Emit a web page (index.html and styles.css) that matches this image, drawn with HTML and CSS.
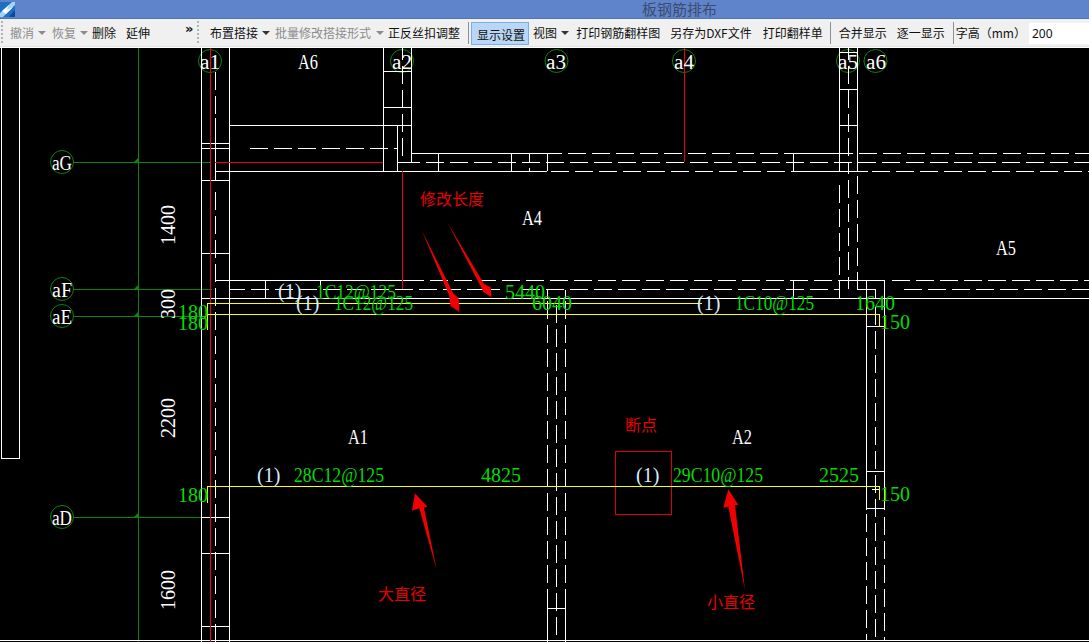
FILE: index.html
```html
<!DOCTYPE html>
<html lang="zh">
<head>
<meta charset="utf-8">
<title>板钢筋排布</title>
<link rel="stylesheet" href="styles.css">
</head>
<body>
<header class="titlebar">
  <svg class="app-icon" viewBox="0 0 15 15" width="15" height="15">
    <rect x="0" y="0" width="15" height="15" fill="#1f6fc4"/>
    <path d="M0 11 L12 0 H15 V3 L3 15 H0Z" fill="#9fd4f5"/>
    <path d="M2 9 L9 3 L7 8 L13 5 L6 12Z" fill="#ffffff"/>
    <path d="M9 15 L15 8 V15Z" fill="#0b4a94"/>
  </svg>
  <span class="title">板钢筋排布</span>
</header>
<nav class="toolbar">
  <span class="grip first"></span>
  <span class="tool off m7">撤消</span><i class="caret off-caret"></i>
  <span class="tool off m7">恢复</span><i class="caret off-caret"></i>
  <span class="tool m5">删除</span>
  <span class="tool m10">延伸</span>
  <span class="more">»</span>
  <span class="grip second"></span>
  <span class="tool m11">布置搭接</span><i class="caret"></i>
  <span class="tool off m6">批量修改搭接形式</span><i class="caret off-caret wide"></i>
  <span class="tool m5">正反丝扣调整</span>
  <span class="sep m8"></span>
  <span class="tool pressed">显示设置</span>
  <span class="tool m4">视图</span><i class="caret"></i>
  <span class="tool m8">打印钢筋翻样图</span>
  <span class="tool m10">另存为DXF文件</span>
  <span class="tool m11">打印翻样单</span>
  <span class="sep m7"></span>
  <span class="tool m8">合并显示</span>
  <span class="tool m10">逐一显示</span>
  <span class="sep m8"></span>
  <span class="tool m2 trim">字高（mm）</span>
  <input class="height-input" type="text" value="200">
</nav>
<main class="canvas">
  <svg class="drawing" viewBox="0 48 1089 594" width="1089" height="594">
    <!-- axis lines -->
    <path class="axis" d="M138.5 48V642 M73 162.5H210 M73 289.5H212 M73 316.5H205 M73 517.5H202"/>
    <path class="tick" d="M138 158V162H134Z M138 285V289H134Z M138 312V316H134Z M138 513V517H134Z"/>
    <g class="bubble">
      <circle cx="210" cy="61" r="11.5"/><circle cx="402" cy="61" r="11.5"/><circle cx="556.5" cy="61" r="11.5"/>
      <circle cx="684" cy="61" r="11.5"/><circle cx="848" cy="61" r="11.5"/><circle cx="875.5" cy="61" r="11.5"/>
      <circle cx="62" cy="162" r="11.5"/><circle cx="62" cy="289" r="11.5"/><circle cx="62" cy="316" r="11.5"/><circle cx="62" cy="517" r="11.5"/>
    </g>

    <!-- solid walls -->
    <path class="wall" d="
      M1.5 48V458.5H19.5V48
      M201.5 48V642 M229.5 48V642
      M201 143.5H230 M201 148.5H230 M201 180.5H230 M201 253.5H230
      M201 517.5H230 M201 553.5H230 M201 626.5H230
      M215.5 118V180
      M215 171.5H547 M229 125.5H412
      M383.5 48V171 M397.5 125V171 M411.5 48V162
      M383 71.5H412 M383 107.5H412
      M394 148.5H397
      M411 153.5H562 M397 162.5H402
      M438.5 153V171 M511.5 153V171 M529.5 153V162 M529.5 168V171 M547.5 153V171 M793.5 153V171
      M784 153.5H853 M791 171.5H868
      M839.5 48V171 M857.5 48V171 M839 52.5H858 M839 89.5H858 M839 125.5H858
      M402.5 48V60
      M848.5 48V60
      M215 280.5H406 M229 289.5H245
      M265.5 280V298 M320.5 280V289
      M201 298.5H1089
      M839 280.5H884 M793.5 280V298 M839.5 280V298 M848.5 277V289 M857.5 273V289
      M866.5 280V510 M884.5 280V510 M857 289.5H875 M875.5 289V298
      M866 326.5H885 M866 471.5H885 M866 508.5H885 M872 489.5H880
      M547.5 290V298 M565.5 290V298 M556 298.5H566
      M547 608.5H566 M547.5 600V642 M565.5 600V642
      M0 640.5H1089"/>

    <!-- dashed walls -->
    <path class="dash" d="M215.5 72V118 M215.5 192V642"/>
    <path class="dash" d="M402.5 66V156"/>
    <path class="dash" d="M848.5 66V156 M848.5 162V174 M848.5 180V276"/>
    <path class="dash" d="M568 153.5H784 M859 153.5H1089"/>
    <path class="dash" d="M402 162.5H1089"/>
    <path class="dash" d="M551 171.5H787 M872 171.5H1089"/>
    <path class="dash" d="M250 148.5H388"/>
    <path class="dash" d="M406 280.5H839 M892 280.5H1089"/>
    <path class="dash" d="M251 289.5H500 M522 289.5H840 M904 289.5H1089"/>
    <path class="dash" d="M839.5 185V280 M857.5 176V273"/>
    <path class="dash" d="M547.5 301V600 M556.5 305V640 M565.5 301V600"/>
    <path class="dash" d="M875.5 307V640 M866.5 514V640 M884.5 517V640"/>

    <!-- red marks -->
    <path class="red" d="M210.5 48V642 M215 162.5H383 M402.5 171V289 M684.5 48V162"/>
    <rect class="box" x="615.5" y="451.5" width="56" height="63"/>

    <!-- yellow rebars -->
    <path class="rebar" d="M207.5 330V303.5H702 M207.5 314.5H879.5V327 M207.5 503V486.5H879.5V500"/>

    <!-- arrows -->
    <g class="arrow">
      <polygon points="421.5,230 449,295 450.5,306 459.5,312 458.5,298 453,293"/>
      <polygon points="447.3,222.3 481,287 483.3,291.7 491.3,297.3 490.7,287.3 484,284"/>
      <polygon points="415,493.3 412,510.7 419.3,508.3 436.7,570 424,507.7 427.3,506.7"/>
      <polygon points="728.3,489.3 723.3,507.7 728.3,506.7 745,590 735,505 738.3,505"/>
    </g>

    <!-- white labels -->
    <g class="label">
      <text x="200" y="69" textLength="20" lengthAdjust="spacingAndGlyphs">a1</text>
      <text x="392" y="69" textLength="20" lengthAdjust="spacingAndGlyphs">a2</text>
      <text x="546" y="69" textLength="20" lengthAdjust="spacingAndGlyphs">a3</text>
      <text x="674" y="69" textLength="20" lengthAdjust="spacingAndGlyphs">a4</text>
      <text x="838" y="69" textLength="20" lengthAdjust="spacingAndGlyphs">a5</text>
      <text x="866" y="69" textLength="20" lengthAdjust="spacingAndGlyphs">a6</text>
      <text x="52" y="170" textLength="20" lengthAdjust="spacingAndGlyphs">aG</text>
      <text x="52" y="297" textLength="20" lengthAdjust="spacingAndGlyphs">aF</text>
      <text x="52" y="324" textLength="20" lengthAdjust="spacingAndGlyphs">aE</text>
      <text x="52" y="525" textLength="20" lengthAdjust="spacingAndGlyphs">aD</text>
      <text x="298" y="69" textLength="20" lengthAdjust="spacingAndGlyphs">A6</text>
      <text x="522" y="225" textLength="20" lengthAdjust="spacingAndGlyphs">A4</text>
      <text x="996" y="255" textLength="20" lengthAdjust="spacingAndGlyphs">A5</text>
      <text x="348" y="444" textLength="20" lengthAdjust="spacingAndGlyphs">A1</text>
      <text x="732" y="444" textLength="20" lengthAdjust="spacingAndGlyphs">A2</text>
      <text class="bar-no" x="278" y="298">(1)</text>
      <text class="bar-no" x="296" y="310">(1)</text>
      <text class="bar-no" x="697" y="310">(1)</text>
      <text class="bar-no" x="257" y="482">(1)</text>
      <text class="bar-no" x="636" y="482">(1)</text>
      <text transform="translate(175 245) rotate(-90)">1400</text>
      <text transform="translate(175 319) rotate(-90)">300</text>
      <text transform="translate(175 438) rotate(-90)">2200</text>
      <text transform="translate(175 610) rotate(-90)">1600</text>
    </g>

    <!-- green rebar data -->
    <g class="data">
      <text x="178" y="319">180</text>
      <text x="178" y="330">180</text>
      <text x="178" y="502">180</text>
      <text x="316" y="299" textLength="80" lengthAdjust="spacingAndGlyphs">1C12@125</text>
      <text x="334" y="310" textLength="79" lengthAdjust="spacingAndGlyphs">1C12@125</text>
      <text x="505" y="299">5440</text>
      <text x="532" y="310">6040</text>
      <text x="735" y="310" textLength="79" lengthAdjust="spacingAndGlyphs">1C10@125</text>
      <text x="855" y="310">1640</text>
      <text x="880" y="329">150</text>
      <text x="880" y="501">150</text>
      <text x="294" y="482" textLength="90" lengthAdjust="spacingAndGlyphs">28C12@125</text>
      <text x="481" y="482">4825</text>
      <text x="673" y="482" textLength="90" lengthAdjust="spacingAndGlyphs">29C10@125</text>
      <text x="819" y="482">2525</text>
    </g>

    <!-- red notes -->
    <g class="note">
      <text x="420" y="205">修改长度</text>
      <text x="625" y="431">断点</text>
      <text x="378" y="600">大直径</text>
      <text x="707" y="608">小直径</text>
    </g>
  </svg>
</main>
</body>
</html>
```
FILE: styles.css
```css
* { box-sizing: border-box; }
html, body { margin: 0; padding: 0; background: #000; }
body { width: 1089px; height: 642px; overflow: hidden; font-family: "Noto Sans CJK SC", "Noto Sans", sans-serif; }

.titlebar {
  display: flex; align-items: center; height: 19px;
  background: #5f84cc; border-bottom: 1px solid #4f74ba;
}
.app-icon { display: block; flex: none; }
.title { margin-left: 627px; font-size: 15px; line-height: 18px; color: #3d4c6c; }

.toolbar {
  display: flex; align-items: center; height: 29px;
  background: #f0f0f0; border-bottom: 1px solid #fff; box-shadow: inset 0 -1px 0 #e4e4e4;
  font-size: 12px; color: #111;
}
.tool { flex: none; line-height: 18px; white-space: nowrap; }
.trim { text-spacing-trim: space-all; }
.off { color: #8c8c8c; }
.m2 { margin-left: 2px; } .m4 { margin-left: 4px; } .m5 { margin-left: 5px; }
.m6 { margin-left: 6px; } .m7 { margin-left: 7px; } .m8 { margin-left: 8px; }
.m10 { margin-left: 10px; } .m11 { margin-left: 11px; }
.first { margin-left: 1px; }
.second { margin-left: 5px; }
.grip {
  flex: none; width: 2px; height: 24px;
  background: repeating-linear-gradient(#b4b4b4 0 2px, transparent 2px 4px);
}
.caret {
  flex: none; width: 0; height: 0; margin-left: 4px;
  border-left: 4px solid transparent; border-right: 4px solid transparent; border-top: 4px solid #333;
  margin-right: -1px;
}
.off-caret { border-top-color: #8c8c8c; }
.wide { margin-left: 5px; }
.more { flex: none; width: 7px; margin-left: 35px; margin-top: -10px; font: bold 13px/13px "DejaVu Sans", sans-serif; color: #111; }
.sep { flex: none; width: 1px; height: 22px; background: #8f8f8f; }
.pressed {
  margin-left: 2px; width: 58px; height: 23px; padding-left: 5px; line-height: 23px;
  background: #b8d6f5; border: 1px solid #79aee6; margin-top: 1px;
}
.height-input {
  flex: none; width: 60px; height: 21px; margin-left: 3px; padding: 0 3px;
  border: 0; outline: 0; background: #fff; font: 12px "Noto Sans", sans-serif; color: #111;
}

.canvas { background: #000; height: 594px; }
.drawing { display: block; }
.drawing path, .drawing rect, .drawing circle { fill: none; }
.axis { stroke: #0a860a; stroke-width: 1; shape-rendering: crispEdges; }
.drawing .tick { fill: #0a860a; }
.bubble circle { stroke: #0a860a; stroke-width: 1; }
.wall { stroke: #fff; stroke-width: 1; shape-rendering: crispEdges; }
.dash { stroke: #fff; stroke-width: 1; stroke-dasharray: 18 6; shape-rendering: crispEdges; }
.red { stroke: #f00000; stroke-width: 1; shape-rendering: crispEdges; }
.drawing .box { stroke: #e00000; stroke-width: 1; shape-rendering: crispEdges; }
.rebar { stroke: #ffff00; stroke-width: 1; shape-rendering: crispEdges; }
.arrow polygon { fill: #f00000; }
.label text { font: 20px "Liberation Serif", serif; fill: #fff; }
.label .bar-no { fill: #d8ecff; }
.data text { font: 20px "Liberation Serif", serif; fill: #00dc00; }
.note text { font: 16px "Noto Sans CJK SC", sans-serif; fill: #e80000; }
```
